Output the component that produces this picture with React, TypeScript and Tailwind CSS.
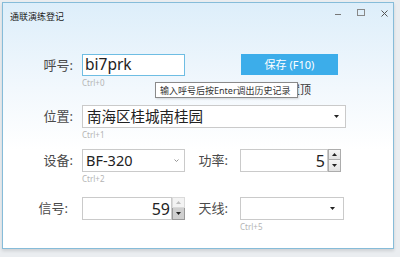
import React from "react";

const FONT = "font-['Noto_Sans','Noto_Sans_CJK_SC',sans-serif]";

function Hint({ text }: { text: string }) {
  return <div className="mt-[2px] h-[10px] text-[8px] leading-[10px] text-[#b4b4b4]">{text}</div>;
}

function Label({ text, className = "" }: { text: string; className?: string }) {
  return (
    <div className={"flex h-[23px] items-center justify-end text-[13px] leading-none text-[#4a4a4a] " + className}>
      {text}
    </div>
  );
}

function DropTri({ color = "#222" }: { color?: string }) {
  return (
    <svg width="5" height="3" viewBox="0 0 5 3">
      <polygon points="0,0 5,0 2.5,3" fill={color} />
    </svg>
  );
}

function Spinner({ upDisabled }: { upDisabled?: boolean }) {
  return (
    <div className="flex h-[23px] w-[13px] flex-col">
      <div
        className={
          "flex h-[11px] items-center justify-center border " +
          (upDisabled ? "border-[#dadada] bg-[#f3f3f3]" : "border-[#acacac] bg-gradient-to-b from-[#f5f5f5] to-[#e2e2e2]")
        }
      >
        <svg width="5" height="3" viewBox="0 0 5 3">
          <polygon points="0,3 5,3 2.5,0" fill={upDisabled ? "#bdbdbd" : "#222"} />
        </svg>
      </div>
      <div
        className={
          "flex h-[12px] items-center justify-center border border-t-0 " +
          (upDisabled ? "border-[#9a9a9a] bg-[#cfcfcf]" : "border-[#acacac] bg-gradient-to-b from-[#f5f5f5] to-[#e2e2e2]")
        }
      >
        <DropTri />
      </div>
    </div>
  );
}

export default function App() {
  return (
    <div className={"h-[257px] w-[400px] bg-[#eaedf0] pl-[2px] pt-[2px] " + FONT}>
      <div className="relative h-[247px] w-[392px] border border-[#86bcd9] bg-[linear-gradient(to_bottom,#ddeefa_0%,#f2f8fd_35%,#ffffff_60%)] shadow-[0_2px_3px_rgba(0,0,0,0.12)]">
        {/* title bar */}
        <div className="flex h-[30px] items-start">
          <div className="pl-[7px] pt-[8px] text-[9px] leading-[12px] text-[#222]">通联演练登记</div>
          <div className="ml-auto flex items-start gap-[16px] pr-[5px]">
            <div className="pt-[11px]">
              <div className="h-[1px] w-[6px] bg-[#777]" />
            </div>
            <div className="pt-[6px]">
              <div className="h-[7px] w-[8px] border border-[#888]" />
            </div>
            <div className="pt-[7px]">
              <svg width="7" height="7" viewBox="0 0 7 7">
                <path d="M0.5 0.5 L6.5 6.5 M6.5 0.5 L0.5 6.5" stroke="#555" strokeWidth="1" />
              </svg>
            </div>
          </div>
        </div>

        {/* content */}
        <div className="pt-[21px]">
          {/* row 1 */}
          <div className="flex items-start">
            <Label text="呼号:" className="w-[70px] h-[22px]" />
            <div className="ml-[9px] w-[103px]">
              <div className="flex h-[22px] items-center border border-[#6ebde3] bg-white pl-[2px] text-[15.5px] leading-none text-[#222]">
                bi7prk
              </div>
              <Hint text="Ctrl+0" />
            </div>
            <div className="ml-[56px] flex w-[97px] flex-col">
              <div className="flex h-[21px] items-center justify-center bg-[#3cadea] text-[11px] leading-none text-white">
                保存 (F10)
              </div>
              <div className="mt-[9px] flex items-center pl-[12px]">
                <div className="h-[11px] w-[11px] border border-[#888] bg-white" />
                <span className="ml-[3px] text-[11px] leading-[12px] text-[#333]">窗口置顶</span>
              </div>
            </div>
          </div>

          {/* row 2 */}
          <div className="mt-[9px] flex items-start">
            <Label text="位置:" className="w-[70px]" />
            <div className="ml-[9px] w-[264px]">
              <div className="flex h-[23px] items-center border border-[#cacaca] bg-white pl-[4px] pr-[6px] text-[14.5px] leading-none text-[#222]">
                南海区桂城南桂园
                <div className="ml-auto">
                  <DropTri />
                </div>
              </div>
              <Hint text="Ctrl+1" />
            </div>
          </div>

          {/* row 3 */}
          <div className="mt-[9px] flex items-start">
            <Label text="设备:" className="w-[70px]" />
            <div className="ml-[9px] w-[103px]">
              <div className="flex h-[23px] items-center border border-[#cacaca] bg-white pl-[3px] pr-[5px] text-[14.5px] leading-none text-[#222]">
                BF-320
                <svg className="ml-auto" width="5" height="3" viewBox="0 0 5 3">
                  <path d="M0.5 0.5 L2.5 2.5 L4.5 0.5" stroke="#8a8a8a" fill="none" strokeWidth="0.9" />
                </svg>
              </div>
              <Hint text="Ctrl+2" />
            </div>
            <Label text="功率:" className="ml-[12px] w-[31px]" />
            <div className="ml-[12px] flex">
              <div className="flex h-[23px] w-[88px] items-center justify-end border border-[#cacaca] bg-white pr-[2px] text-[16px] leading-none text-[#222]">
                5
              </div>
              <Spinner />
            </div>
          </div>

          {/* row 4 */}
          <div className="mt-[13px] flex items-start">
            <Label text="信号:" className="w-[70px] pr-[5px]" />
            <div className="ml-[9px] flex">
              <div className="flex h-[23px] w-[90px] items-center justify-end border border-[#cacaca] bg-white pr-[1px] text-[16px] leading-none text-[#222]">
                59
              </div>
              <Spinner upDisabled />
            </div>
            <Label text="天线:" className="ml-[12px] w-[31px]" />
            <div className="ml-[12px] w-[104px]">
              <div className="flex h-[23px] items-center justify-end border border-[#cacaca] bg-white pr-[8px]">
                <DropTri />
              </div>
              <Hint text="Ctrl+5" />
            </div>
          </div>
        </div>

        {/* tooltip */}
        <div className="absolute left-[152px] top-[79px] flex h-[16px] w-[143px] items-center whitespace-nowrap border border-[#8a8a8a] bg-white pl-[4px] text-[9px] leading-none text-[#333] shadow-[1px_1px_2px_rgba(0,0,0,0.15)]">
          输入呼号后按Enter调出历史记录
        </div>
      </div>
    </div>
  );
}
